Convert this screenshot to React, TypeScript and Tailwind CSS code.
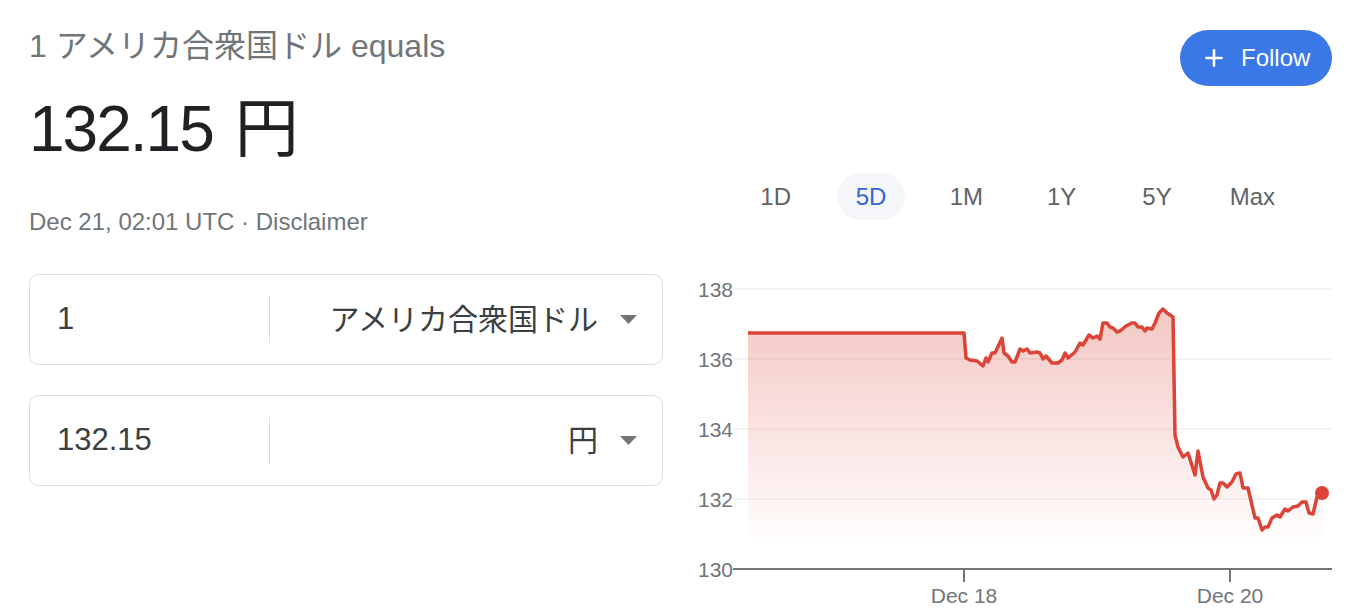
import { Plus } from "lucide-react";

const points: [number, number][] = [
  [748, 333], [964, 333], [966, 358], [970, 360], [977, 361], [983, 366], [986, 358], [988, 362],
  [992, 353], [995, 353], [1002, 338], [1004, 353], [1008, 356], [1012, 362], [1015, 362], [1020, 349],
  [1023, 351], [1027, 349], [1030, 353], [1037, 352], [1040, 353], [1043, 359], [1046, 356], [1052, 363],
  [1058, 363], [1062, 360], [1065, 353], [1068, 358], [1075, 352], [1080, 343], [1083, 345], [1089, 335],
  [1093, 338], [1097, 336], [1100, 339], [1103, 323], [1107, 323], [1110, 327], [1113, 328], [1117, 332],
  [1120, 331], [1126, 326], [1132, 323], [1135, 323], [1138, 327], [1142, 327], [1145, 331], [1147, 328],
  [1152, 329], [1155, 323], [1159, 313], [1163, 309], [1167, 313], [1173, 317], [1175, 435], [1178, 447],
  [1183, 457], [1188, 453], [1195, 475], [1198, 451], [1203, 477], [1208, 488], [1211, 490], [1214, 499],
  [1217, 495], [1220, 483], [1223, 483], [1227, 487], [1232, 482], [1236, 474], [1240, 473], [1243, 488],
  [1248, 488], [1255, 518], [1258, 518], [1262, 530], [1265, 527], [1268, 527], [1272, 518], [1277, 515],
  [1280, 517], [1285, 509], [1288, 511], [1293, 507], [1298, 506], [1302, 502], [1306, 502], [1309, 513],
  [1313, 514], [1317, 497], [1322, 493],
];

const tabs = ["1D", "5D", "1M", "1Y", "5Y", "Max"];
const gridY = [
  { y: 289, label: "138" },
  { y: 359, label: "136" },
  { y: 429, label: "134" },
  { y: 499, label: "132" },
];

function CurrencyBox({ amount, currency }: { amount: string; currency: string }) {
  return (
    <div className="flex items-center h-[91px] border border-[#dadce0] rounded-[10px]">
      <div className="w-[239px] pl-[27px] text-[31px] text-[#3c4043]">{amount}</div>
      <div className="w-px h-[47px] bg-[#dadce0]" />
      <div className="flex flex-1 items-center justify-end gap-[22px] pr-[25px] text-[30px] text-[#3c4043]">
        <span>{currency}</span>
        <svg width="17" height="9" viewBox="0 0 17 9">
          <path d="M0 0 L17 0 L8.5 9 Z" fill="#757575" />
        </svg>
      </div>
    </div>
  );
}

function Chart() {
  const line = points.map(([x, y]) => `${x},${y}`).join(" ");
  const area = `M748,537 L${line.replace(/ /g, " L")} L1322,537 Z`;

  return (
    <svg width="662" height="344" viewBox="690 270 662 344" className="block">
      <defs>
        <linearGradient id="fill" x1="0" y1="309" x2="0" y2="540" gradientUnits="userSpaceOnUse">
          <stop offset="0" stopColor="#db4437" stopOpacity="0.3" />
          <stop offset="1" stopColor="#db4437" stopOpacity="0.01" />
        </linearGradient>
      </defs>
      {gridY.map((g) => (
        <g key={g.label}>
          <line x1="733" x2="1332" y1={g.y} y2={g.y} stroke="#f1f1f1" strokeWidth="1.5" />
          <text x="733" y={g.y} textAnchor="end" dominantBaseline="central" fontSize="21" fill="#70757a">
            {g.label}
          </text>
        </g>
      ))}
      <path d={area} fill="url(#fill)" />
      <polyline points={line} fill="none" stroke="#db4437" strokeWidth="3.5" strokeLinejoin="round" />
      <circle cx="1322" cy="493" r="7" fill="#db4437" />
      <line x1="733" x2="1332" y1="569" y2="569" stroke="#70757a" strokeWidth="2" />
      <text x="733" y="569" textAnchor="end" dominantBaseline="central" fontSize="21" fill="#70757a">
        130
      </text>
      <line x1="964" x2="964" y1="569" y2="582" stroke="#70757a" strokeWidth="2" />
      <line x1="1230" x2="1230" y1="569" y2="582" stroke="#70757a" strokeWidth="2" />
      <text x="964" y="595" textAnchor="middle" dominantBaseline="central" fontSize="21" fill="#70757a">
        Dec 18
      </text>
      <text x="1230" y="595" textAnchor="middle" dominantBaseline="central" fontSize="21" fill="#70757a">
        Dec 20
      </text>
    </svg>
  );
}

export default function App() {
  return (
    <div
      className="flex w-[1352px] h-[614px] bg-white overflow-hidden"
      style={{ fontFamily: '"Liberation Sans", Arial, "Noto Sans CJK JP", sans-serif' }}
    >
      <div className="w-[634px] ml-[29px] flex flex-col">
        <div className="pt-[26px] h-[66px] leading-[40px] text-[32px] text-[#70757a] whitespace-nowrap">
          1 アメリカ合衆国ドル equals
        </div>
        <div className="mt-[27px] leading-[72px] text-[64px] text-[#202124] whitespace-nowrap">
          <span className="tracking-[-2px]">132.15</span>
          <span className="ml-[22px]">円</span>
        </div>
        <div className="mt-[41px] leading-[32px] text-[24px] text-[#70757a]">
          Dec 21, 02:01 UTC · Disclaimer
        </div>
        <div className="mt-[36px] flex flex-col gap-[30px]">
          <CurrencyBox amount="1" currency="アメリカ合衆国ドル" />
          <CurrencyBox amount="132.15" currency="円" />
        </div>
      </div>

      <div className="ml-[27px] flex-1 flex flex-col">
        <div className="flex justify-end pt-[30px] pr-[20px]">
          <button className="flex items-center gap-[14px] h-[56px] w-[152px] pl-[21px] rounded-full bg-[#3b78e7] text-white text-[24px]">
            <Plus size={26} strokeWidth={2.4} />
            <span>Follow</span>
          </button>
        </div>
        <div className="mt-[87px] ml-[38px] grid grid-cols-6 w-[572px] h-[47px]">
          {tabs.map((t) => (
            <div key={t} className="flex items-center justify-center">
              <span
                className={
                  t === "5D"
                    ? "flex items-center h-[47px] px-[19px] rounded-full bg-[#f4f6f9] text-[24px] text-[#3367d6]"
                    : "flex items-center h-[47px] px-[19px] text-[24px] text-[#5f6368]"
                }
              >
                {t}
              </span>
            </div>
          ))}
        </div>
        <div className="mt-[50px]">
          <Chart />
        </div>
      </div>
    </div>
  );
}
